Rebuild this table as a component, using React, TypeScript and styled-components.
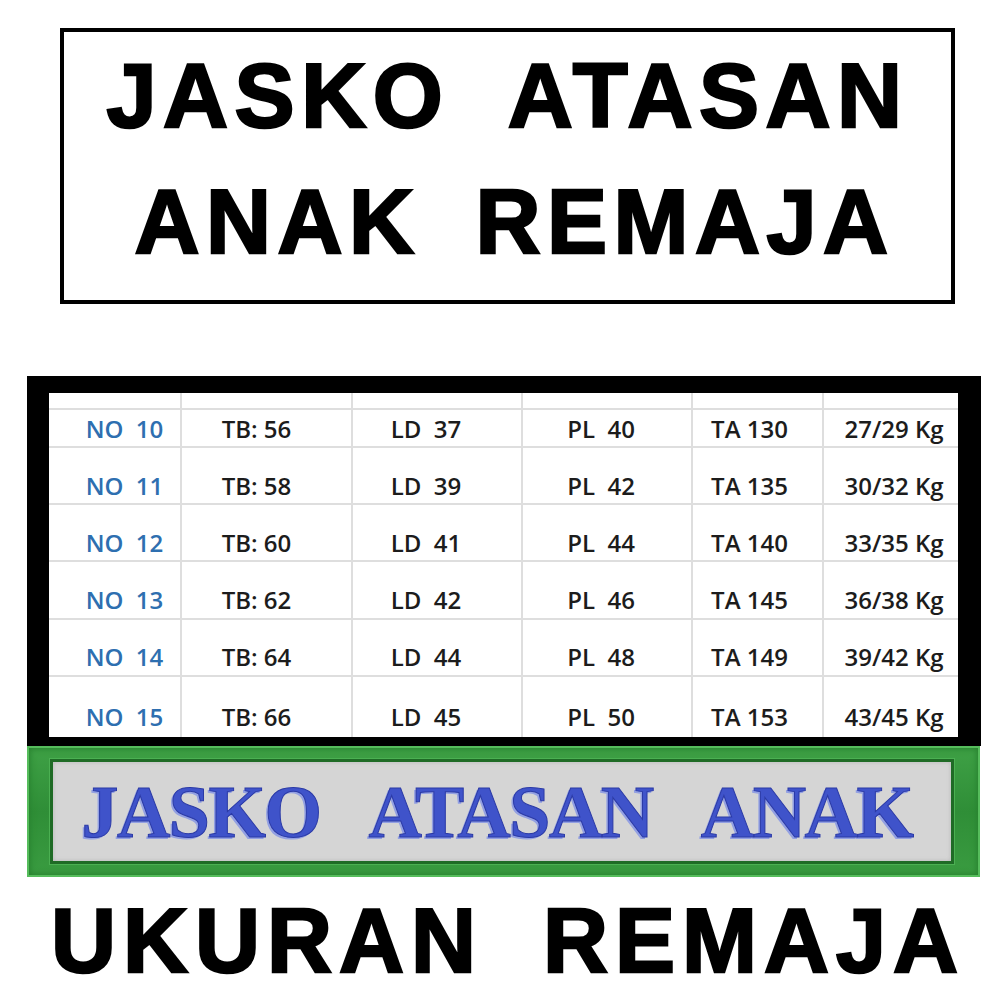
import styled, { createGlobalStyle } from 'styled-components';

const GlobalStyle = createGlobalStyle`
  html, body {
    margin: 0;
    padding: 0;
    background: #ffffff;
  }
  body {
    font-family: "Liberation Sans", Arial, sans-serif;
  }
`;

const Page = styled.div`
  width: 1004px;
  height: 1004px;
  display: flex;
  flex-direction: column;
  align-items: flex-start;
  overflow: hidden;
  background: #fff;
`;

const TitleBox = styled.div`
  box-sizing: border-box;
  margin: 28px 0 0 60px;
  width: 895px;
  height: 276px;
  border: 4px solid #000;
  padding-top: 1px;
  display: flex;
  flex-direction: column;
  align-items: center;
`;

const BigLine = styled.div<{ $ws: number; $nudge?: number }>`
  font-family: "Liberation Sans", Arial, sans-serif;
  font-weight: 700;
  font-size: 90px;
  line-height: 126px;
  letter-spacing: 6.5px;
  word-spacing: ${(p) => p.$ws}px;
  margin-left: ${(p) => p.$nudge ?? 0}px;
  color: #000;
  -webkit-text-stroke: 2.5px #000;
  white-space: pre;
`;

const TableFrame = styled.div`
  box-sizing: border-box;
  margin: 72px 0 0 27px;
  width: 954px;
  height: 370px;
  border-style: solid;
  border-color: #000;
  border-width: 17px 23px 9px 22px;
  background: #fff;
  display: flex;
  flex-direction: column;
`;

const Row = styled.div<{ $h?: number; $grow?: boolean }>`
  display: grid;
  grid-template-columns: 133px 171px 170px 170px 131px 1fr;
  height: ${(p) => (p.$h ? `${p.$h}px` : 'auto')};
  flex: ${(p) => (p.$grow ? '1' : 'none')};
  border-bottom: 2px solid #dedede;
  box-sizing: border-box;
  &:last-child {
    border-bottom: none;
  }
`;

const Cell = styled.div<{ $blue?: boolean; $shift?: number }>`
  display: flex;
  align-items: center;
  justify-content: center;
  padding-left: ${(p) => Math.max(0, (p.$shift ?? 0) * 2)}px;
  padding-right: ${(p) => Math.max(0, -(p.$shift ?? 0) * 2)}px;
  border-right: 2px solid #dedede;
  font-family: "Open Sans", "Noto Sans", sans-serif;
  font-weight: 600;
  font-size: 24px;
  color: ${(p) => (p.$blue ? '#2e6fb0' : '#1c1c1c')};
  white-space: pre;
  &:last-child {
    border-right: none;
  }
`;

const Banner = styled.div`
  box-sizing: border-box;
  margin-left: 27px;
  width: 953px;
  height: 131px;
  padding: 13px 26px 13px 23px;
  background: linear-gradient(180deg, #3fa146 0%, #2f8e37 50%, #3a9c41 100%);
  box-shadow: inset 0 0 0 2px #56bd5c, inset 0 0 6px 3px #27802e;
  display: flex;
`;

const BannerInner = styled.div`
  flex: 1;
  background: #d5d5d5;
  border: 3px solid #1f6b26;
  box-shadow: 0 0 0 1px #4bb052, inset 0 0 4px #b8b8b8;
  display: flex;
  align-items: center;
  justify-content: center;
  padding-right: 10px;
`;

const BannerText = styled.div`
  font-family: "Liberation Serif", "Times New Roman", serif;
  font-weight: 700;
  font-size: 74px;
  line-height: 1;
  letter-spacing: -1.5px;
  word-spacing: 9px;
  color: #3f53ca;
  -webkit-text-stroke: 1px #2b3aa6;
  text-shadow: -2px 2px 0 #93a0e2;
  white-space: pre;
`;

const Footer = styled.div`
  margin-top: 14px;
  width: 1004px;
  padding-left: 12px;
  box-sizing: border-box;
  text-align: center;
  font-family: "Liberation Sans", Arial, sans-serif;
  font-weight: 700;
  font-size: 90px;
  line-height: 100px;
  letter-spacing: 7px;
  word-spacing: -2px;
  color: #000;
  -webkit-text-stroke: 2.5px #000;
  white-space: pre;
`;

const sizes = [
  ['NO  10', 'TB: 56', 'LD  37', 'PL  40', 'TA 130', '27/29 Kg'],
  ['NO  11', 'TB: 58', 'LD  39', 'PL  42', 'TA 135', '30/32 Kg'],
  ['NO  12', 'TB: 60', 'LD  41', 'PL  44', 'TA 140', '33/35 Kg'],
  ['NO  13', 'TB: 62', 'LD  42', 'PL  46', 'TA 145', '36/38 Kg'],
  ['NO  14', 'TB: 64', 'LD  44', 'PL  48', 'TA 149', '39/42 Kg'],
  ['NO  15', 'TB: 66', 'LD  45', 'PL  50', 'TA 153', '43/45 Kg'],
];

// how far each column's text sits off its centre, in px
const shift = [10, -10, -11, -6, -8, 3];

function EmptyRow({ h }: { h: number }) {
  return (
    <Row $h={h}>
      {shift.map((_, i) => (
        <Cell key={i} />
      ))}
    </Row>
  );
}

export default function App() {
  return (
    <>
      <GlobalStyle />
      <Page>
        <TitleBox>
          <BigLine $ws={-0.5}>JASKO  ATASAN</BigLine>
          <BigLine $ws={-4} $nudge={14}>ANAK  REMAJA</BigLine>
        </TitleBox>

        <TableFrame>
          <EmptyRow h={17} />
          {sizes.map((row, r) => (
            <div key={r} style={{ display: 'contents' }}>
              <Row $h={r === sizes.length - 1 ? undefined : 38} $grow={r === sizes.length - 1}>
                {row.map((txt, i) => (
                  <Cell key={i} $blue={i === 0} $shift={shift[i]}>
                    {txt}
                  </Cell>
                ))}
              </Row>
              {r < sizes.length - 1 && <EmptyRow h={19.2} />}
            </div>
          ))}
        </TableFrame>

        <Banner>
          <BannerInner>
            <BannerText>JASKO  ATASAN  ANAK</BannerText>
          </BannerInner>
        </Banner>

        <Footer>UKURAN  REMAJA</Footer>
      </Page>
    </>
  );
}
